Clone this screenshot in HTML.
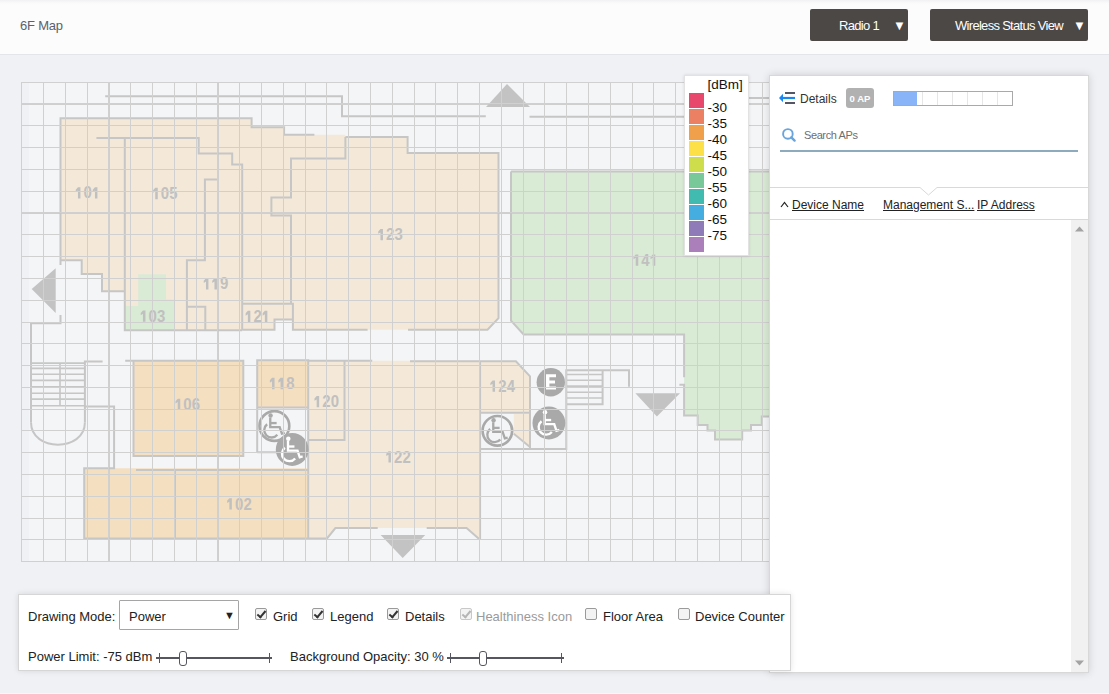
<!DOCTYPE html>
<html><head><meta charset="utf-8">
<style>
*{box-sizing:border-box;}
html,body{margin:0;padding:0;}
body{width:1109px;height:694px;overflow:hidden;position:relative;background:#f0f1f5;font-family:"Liberation Sans",sans-serif;}
.hdr{position:absolute;left:0;top:0;width:1109px;height:55px;background:linear-gradient(#f1f1f3 0px,#fafafb 3px,#fcfcfd 5px);border-bottom:1px solid #e3e5ea;}
.hdr .ttl{position:absolute;left:20px;top:18px;font-size:13px;color:#5c606d;letter-spacing:-0.2px;}
.btn{position:absolute;top:9px;height:32px;background:#4b4846;border-radius:2px;color:#fff;font-size:13px;letter-spacing:-0.7px;}
.btn span{position:absolute;top:9px;white-space:nowrap;}
.btn i{position:absolute;top:9px;font-style:normal;font-size:13px;letter-spacing:0;}
svg.map{position:absolute;left:0;top:0;}
.legend{position:absolute;left:684px;top:75px;width:65px;height:181px;background:#fff;border:1px solid #e2e2e2;box-shadow:0 0 3px rgba(0,0,0,0.12);}
.legend .hd{position:absolute;left:22.5px;top:1px;font-size:13.5px;color:#111;}
.legend .sw{position:absolute;left:4px;width:15px;height:15px;}
.legend .lt{position:absolute;left:22.5px;font-size:13.5px;color:#111;margin-top:-0.5px;}
.panel{position:absolute;left:769px;top:75px;width:320px;height:598px;background:#fff;border:1px solid #d8d8d8;box-shadow:0 0 8px rgba(0,0,0,0.15);}
.ctrl{position:absolute;left:18px;top:594px;width:773px;height:77px;background:#fff;border:1px solid #d6d6d6;box-shadow:0 0 6px rgba(0,0,0,0.11);font-size:13px;color:#222;}
.ctrl .t{position:absolute;white-space:nowrap;margin-top:-1px;}
.cb{position:absolute;width:12px;height:12px;border:1px solid #9a9a9a;border-radius:2px;background:#f3f3f3;}
.cb.on::after{content:"";position:absolute;left:3px;top:0px;width:3px;height:7px;border:solid #333;border-width:0 2px 2px 0;transform:rotate(40deg);}
.cb.dis{border-color:#c8c8c8;}
.cb.dis::after{border-color:#b5b5b5;}
.slider{position:absolute;height:14px;}
.slider .ln{position:absolute;left:0;right:0;top:6px;height:2px;background:#55565f;}
.slider .tk{position:absolute;top:2px;width:1px;height:10px;background:#55565f;}
.slider .th{position:absolute;top:0;width:8px;height:15px;background:#fff;border:1px solid #55565f;border-radius:3px;}
</style></head>
<body>
<div class="hdr"><div class="ttl">6F Map</div></div>
<div class="btn" style="left:810px;width:98px;"><span style="left:29px">Radio 1</span><i style="left:83px">&#9660;</i></div>
<div class="btn" style="left:930px;width:158px;"><span style="left:25px">Wireless Status View</span><i style="left:143px">&#9660;</i></div>

<svg class="map" width="1109" height="694" viewBox="0 0 1109 694">
<rect x="21.6" y="82.4" width="758.4" height="478.61" fill="#f4f5f7"/>
<rect x="22" y="83" width="7" height="478" fill="#eceef1" opacity="0.6"/>
<polygon points="60.5,118.2 251.6,118.2 251.6,127.3 284.1,127.3 284.1,134.7 345.4,134.7 345.4,136.9 407.6,136.9 407.6,152.9 498.5,152.9 498.5,318.2 487.5,329.8 292.9,329.8 292.9,319.4 274.5,319.4 274.5,329.8 124.8,330.3 124.8,291.3 102,291.3 102,274 81.7,274 81.7,260.3 60.5,260.3" fill="#f4e9d8"/>
<rect x="133.5" y="360.7" width="109.8" height="95.3" fill="#f4dfc1"/>
<rect x="257.2" y="360.2" width="51" height="47.4" fill="#f4dfc1"/>
<rect x="84.2" y="468.3" width="223.3" height="70.1" fill="#f4dfc1"/>
<polygon points="308.2,360.8 480.1,360.8 480.1,539.6 466.6,528 335.4,528 327,538.4 308.2,538.4" fill="#f4e9d8"/>
<polygon points="480.1,361.2 515.9,361.2 530,376.3 530,412.8 480.1,412.8" fill="#f4e9d8"/>
<polygon points="513.8,414 530,414 530,448 513.8,433.8" fill="#f4e9d8"/>
<polygon points="511,171.6 780,171.6 780,416.5 761.8,416.5 761.8,425 751,425 751,430.6 742.2,430.6 742.2,439.6 715,439.6 715,430.6 707.5,430.6 707.5,425 697.7,425 697.7,415.6 684.1,415.6 684.1,334.4 523.6,334.4 511,320.6" fill="#d9ead5"/>
<polygon points="138.2,274.2 166.1,274.2 166.1,299.4 174.7,299.4 174.7,330.3 125,330.3 125,305.9 138.2,305.9" fill="#d9ead5"/>
<rect x="257.2" y="407.6" width="51" height="44.7" fill="#f4f5f7"/>
<polyline points="105.2,96.3 342,96.3 342,116.3 485.8,116.3" fill="none" stroke="#c6c6c6" stroke-width="2" stroke-linejoin="miter"/>
<polyline points="529.5,116.7 748,116.7" fill="none" stroke="#c6c6c6" stroke-width="2" stroke-linejoin="miter"/>
<polyline points="748,98 775,98" fill="none" stroke="#c6c6c6" stroke-width="2" stroke-linejoin="miter"/>
<polyline points="109,82 109,562" fill="none" stroke="#cfcfcf" stroke-width="2" stroke-linejoin="miter"/>
<polyline points="218,82 218,562" fill="none" stroke="#cfcfcf" stroke-width="2" stroke-linejoin="miter"/>
<polyline points="21,104 780,104" fill="none" stroke="#cfcfcf" stroke-width="2" stroke-linejoin="miter"/>
<polyline points="21,213 780,213" fill="none" stroke="#cfcfcf" stroke-width="2" stroke-linejoin="miter"/>
<polyline points="60.5,265 60.5,118.2 251.6,118.2 251.6,127.3 284.1,127.3 284.1,134.7 314.4,134.7" fill="none" stroke="#c6c6c6" stroke-width="2" stroke-linejoin="miter"/>
<polyline points="345.4,136.9 407.6,136.9 407.6,152.9 498.5,152.9 498.5,318.2 487.5,329.8 408,329.8" fill="none" stroke="#c6c6c6" stroke-width="2" stroke-linejoin="miter"/>
<polyline points="367.6,329.8 292.9,329.8 292.9,303.7 242.2,303.7" fill="none" stroke="#c6c6c6" stroke-width="2" stroke-linejoin="miter"/>
<polyline points="242.2,329.8 274.5,329.8 274.5,319.4 292.9,319.4" fill="none" stroke="#c6c6c6" stroke-width="2" stroke-linejoin="miter"/>
<polyline points="60.5,260.3 81.7,260.3 81.7,274 102,274 102,291.3 124.8,291.3" fill="none" stroke="#c6c6c6" stroke-width="2" stroke-linejoin="miter"/>
<polyline points="124.8,137.9 124.8,330.3 242.2,330.3" fill="none" stroke="#c6c6c6" stroke-width="2" stroke-linejoin="miter"/>
<polyline points="96.4,137.9 198.7,137.9 198.7,153.4 232.2,153.4 232.2,164.4 242.2,164.4 242.2,330" fill="none" stroke="#c6c6c6" stroke-width="2" stroke-linejoin="miter"/>
<polyline points="217.5,179.6 204.9,179.6 204.9,260.2 186.9,260.2 186.9,330" fill="none" stroke="#c6c6c6" stroke-width="2" stroke-linejoin="miter"/>
<polyline points="186.9,306.8 205.3,306.8 205.3,330" fill="none" stroke="#c6c6c6" stroke-width="2" stroke-linejoin="miter"/>
<polyline points="345.4,136.9 345.4,158.5 291,158.5 291,197.5 271.4,197.5 271.4,215.6 291,215.6 291,303.7" fill="none" stroke="#c6c6c6" stroke-width="2" stroke-linejoin="miter"/>
<polyline points="60.5,314.9 60.5,323.3 31,323.3 31,422.6" fill="none" stroke="#c6c6c6" stroke-width="2" stroke-linejoin="miter"/>
<path d="M31,422.6 C31,452 84.9,452 84.9,422.6" fill="none" stroke="#c6c6c6" stroke-width="2"/>
<polyline points="84.9,422.6 84.9,361.5 102.6,361.5" fill="none" stroke="#c6c6c6" stroke-width="2" stroke-linejoin="miter"/>
<polyline points="31,363.1 84.9,363.1" fill="none" stroke="#c6c6c6" stroke-width="1.6" stroke-linejoin="miter"/>
<polyline points="31,368.4 84.9,368.4" fill="none" stroke="#c6c6c6" stroke-width="1.6" stroke-linejoin="miter"/>
<polyline points="31,374.2 84.9,374.2" fill="none" stroke="#c6c6c6" stroke-width="1.6" stroke-linejoin="miter"/>
<polyline points="31,380.4 84.9,380.4" fill="none" stroke="#c6c6c6" stroke-width="1.6" stroke-linejoin="miter"/>
<polyline points="31,386.9 84.9,386.9" fill="none" stroke="#c6c6c6" stroke-width="1.6" stroke-linejoin="miter"/>
<polyline points="31,393.3 84.9,393.3" fill="none" stroke="#c6c6c6" stroke-width="1.6" stroke-linejoin="miter"/>
<polyline points="31,399.1 84.9,399.1" fill="none" stroke="#c6c6c6" stroke-width="1.6" stroke-linejoin="miter"/>
<polyline points="31,405.8 84.9,405.8" fill="none" stroke="#c6c6c6" stroke-width="1.6" stroke-linejoin="miter"/>
<polyline points="60,363 60,406" fill="none" stroke="#c6c6c6" stroke-width="1.6" stroke-linejoin="miter"/>
<polyline points="84.9,406.5 114.1,406.5 114.1,468.3 84.2,468.3 84.2,538.4 327,538.4 335.4,528 377.7,528" fill="none" stroke="#c6c6c6" stroke-width="2" stroke-linejoin="miter"/>
<polyline points="426.7,528 466.6,528 479.7,539.6" fill="none" stroke="#c6c6c6" stroke-width="2" stroke-linejoin="miter"/>
<polyline points="136,469.9 308.7,469.9" fill="none" stroke="#c6c6c6" stroke-width="2" stroke-linejoin="miter"/>
<polyline points="175,470 175,538" fill="none" stroke="#c6c6c6" stroke-width="2" stroke-linejoin="miter"/>
<polyline points="125.2,360.7 243.3,360.7 243.3,456 133.5,456 133.5,360.7" fill="none" stroke="#c6c6c6" stroke-width="2" stroke-linejoin="miter"/>
<polyline points="257.2,452.3 257.2,360.2 308.2,360.2 308.2,538.4" fill="none" stroke="#c6c6c6" stroke-width="2" stroke-linejoin="miter"/>
<polyline points="257.2,407.6 308.2,407.6" fill="none" stroke="#c6c6c6" stroke-width="2" stroke-linejoin="miter"/>
<polyline points="257.2,452.3 308.2,452.3" fill="none" stroke="#c6c6c6" stroke-width="2" stroke-linejoin="miter"/>
<polyline points="308.2,360.8 372.2,360.8" fill="none" stroke="#c6c6c6" stroke-width="2" stroke-linejoin="miter"/>
<polyline points="344.5,360.8 344.5,440 308.2,440" fill="none" stroke="#c6c6c6" stroke-width="2" stroke-linejoin="miter"/>
<polyline points="410,361.2 515.9,361.2 530,376.3 530,448" fill="none" stroke="#c6c6c6" stroke-width="2" stroke-linejoin="miter"/>
<polyline points="480.1,361.2 480.1,539.6" fill="none" stroke="#c6c6c6" stroke-width="2" stroke-linejoin="miter"/>
<polyline points="480.1,412.8 530,412.8" fill="none" stroke="#c6c6c6" stroke-width="2" stroke-linejoin="miter"/>
<polyline points="480.1,449 566.3,449 566.3,370.3 629,370.3 629,386.8" fill="none" stroke="#c6c6c6" stroke-width="2" stroke-linejoin="miter"/>
<polyline points="602.6,370.3 602.6,404.2 566.3,404.2" fill="none" stroke="#c6c6c6" stroke-width="2" stroke-linejoin="miter"/>
<polyline points="566.3,374.5 602.6,374.5" fill="none" stroke="#c6c6c6" stroke-width="1.6" stroke-linejoin="miter"/>
<polyline points="566.3,380.2 602.6,380.2" fill="none" stroke="#c6c6c6" stroke-width="1.6" stroke-linejoin="miter"/>
<polyline points="566.3,386.1 602.6,386.1" fill="none" stroke="#c6c6c6" stroke-width="1.6" stroke-linejoin="miter"/>
<polyline points="566.3,392.2 602.6,392.2" fill="none" stroke="#c6c6c6" stroke-width="1.6" stroke-linejoin="miter"/>
<polyline points="566.3,398 602.6,398" fill="none" stroke="#c6c6c6" stroke-width="1.6" stroke-linejoin="miter"/>
<polyline points="513.8,433.8 530,447" fill="none" stroke="#c6c6c6" stroke-width="2" stroke-linejoin="miter"/>
<polyline points="511,171.6 780,171.6" fill="none" stroke="#c6c6c6" stroke-width="2" stroke-linejoin="miter"/>
<polyline points="511,171.6 511,320.6 523.6,334.4 684.1,334.4 684.1,377.2" fill="none" stroke="#c6c6c6" stroke-width="2" stroke-linejoin="miter"/>
<polyline points="679.4,384.7 684.1,384.7 684.1,415.6 697.7,415.6 697.7,425 707.5,425 707.5,430.6 715,430.6 715,439.6 742.2,439.6 742.2,430.6 751,430.6 751,425 761.8,425 761.8,416.5 775,416.5" fill="none" stroke="#c6c6c6" stroke-width="2" stroke-linejoin="miter"/>
<polygon points="486,107 530,107 507,84" fill="#c3c3c4"/>
<polygon points="31.7,288.9 55.7,268.2 55.7,312.9" fill="#c3c3c4"/>
<polygon points="380.7,535 425.2,535 402.7,558" fill="#c3c3c4"/>
<polygon points="635.4,393.2 680,393.2 656.9,416.5" fill="#c3c3c4"/>
<circle cx="292.2" cy="449.5" r="16.4" fill="#a9a9a9"/><g transform="translate(292.2,449.5) scale(1.025)" fill="none" stroke="#ffffff" stroke-width="2.5" stroke-linecap="butt" stroke-linejoin="miter"><circle cx="-3.8" cy="-10.4" r="2.2" fill="#ffffff" stroke="none"/><path d="M-4.1,-8.5 V1.1 H5.2 L7.4,7.6 L10.2,6.8" stroke-width="2.3"/><path d="M-4.1,-2.9 H2.2" stroke-width="2.3"/><path d="M-7.19,-1.75 A7.3,7.3 0 1 0 2.89,8.69" stroke-width="2.3"/></g>
<circle cx="548.9" cy="423" r="16.4" fill="#a9a9a9"/><g transform="translate(548.9,423) scale(1.025)" fill="none" stroke="#ffffff" stroke-width="2.5" stroke-linecap="butt" stroke-linejoin="miter"><circle cx="-3.8" cy="-10.4" r="2.2" fill="#ffffff" stroke="none"/><path d="M-4.1,-8.5 V1.1 H5.2 L7.4,7.6 L10.2,6.8" stroke-width="2.3"/><path d="M-4.1,-2.9 H2.2" stroke-width="2.3"/><path d="M-7.19,-1.75 A7.3,7.3 0 1 0 2.89,8.69" stroke-width="2.3"/></g>
<circle cx="274.4" cy="426" r="14.9" fill="none" stroke="#a9a9a9" stroke-width="2.6"/><g transform="translate(274.4,426) scale(1.0125)" fill="none" stroke="#a9a9a9" stroke-width="2.5" stroke-linecap="butt" stroke-linejoin="miter"><circle cx="-3.8" cy="-10.4" r="2.2" fill="#a9a9a9" stroke="none"/><path d="M-4.1,-8.5 V1.1 H5.2 L7.4,7.6 L10.2,6.8" stroke-width="2.3"/><path d="M-4.1,-2.9 H2.2" stroke-width="2.3"/><path d="M-7.19,-1.75 A7.3,7.3 0 1 0 2.89,8.69" stroke-width="2.3"/></g>
<circle cx="497.4" cy="430.8" r="14.8" fill="none" stroke="#a9a9a9" stroke-width="2.6"/><g transform="translate(497.4,430.8) scale(1.00625)" fill="none" stroke="#a9a9a9" stroke-width="2.5" stroke-linecap="butt" stroke-linejoin="miter"><circle cx="-3.8" cy="-10.4" r="2.2" fill="#a9a9a9" stroke="none"/><path d="M-4.1,-8.5 V1.1 H5.2 L7.4,7.6 L10.2,6.8" stroke-width="2.3"/><path d="M-4.1,-2.9 H2.2" stroke-width="2.3"/><path d="M-7.19,-1.75 A7.3,7.3 0 1 0 2.89,8.69" stroke-width="2.3"/></g>
<circle cx="550.8" cy="382.2" r="14.2" fill="#a9a9a9"/>
<path d="M546,374.2 H556 V377.2 H549.4 V380.4 H555 V383.4 H549.4 V386.4 H556 V389.4 H546 Z" fill="#fff"/>
<path d="M80.45,187.15 V198.45 H77.95 V190.55 L75.75,191.95 V189.65 L77.95,187.15 Z" fill="#c0c0c0"/>
<text x="87.70" y="198.45" text-anchor="middle" font-family="Liberation Sans" font-weight="bold" font-size="16" textLength="8.3" lengthAdjust="spacingAndGlyphs" fill="#c0c0c0">0</text>
<path d="M97.45,187.15 V198.45 H94.95 V190.55 L92.75,191.95 V189.65 L94.95,187.15 Z" fill="#c0c0c0"/>
<path d="M157.75,187.85 V199.15 H155.25 V191.25 L153.05,192.65 V190.35 L155.25,187.85 Z" fill="#c0c0c0"/>
<text x="165.00" y="199.15" text-anchor="middle" font-family="Liberation Sans" font-weight="bold" font-size="16" textLength="8.3" lengthAdjust="spacingAndGlyphs" fill="#c0c0c0">0</text>
<text x="173.50" y="199.15" text-anchor="middle" font-family="Liberation Sans" font-weight="bold" font-size="16" textLength="8.3" lengthAdjust="spacingAndGlyphs" fill="#c0c0c0">5</text>
<path d="M208.45,278.15 V289.45 H205.95 V281.55 L203.75,282.95 V280.65 L205.95,278.15 Z" fill="#c0c0c0"/>
<path d="M216.95,278.15 V289.45 H214.45 V281.55 L212.25,282.95 V280.65 L214.45,278.15 Z" fill="#c0c0c0"/>
<text x="224.20" y="289.45" text-anchor="middle" font-family="Liberation Sans" font-weight="bold" font-size="16" textLength="8.3" lengthAdjust="spacingAndGlyphs" fill="#c0c0c0">9</text>
<path d="M250.35,310.85 V322.15 H247.85 V314.25 L245.65,315.65 V313.35 L247.85,310.85 Z" fill="#c0c0c0"/>
<text x="257.60" y="322.15" text-anchor="middle" font-family="Liberation Sans" font-weight="bold" font-size="16" textLength="8.3" lengthAdjust="spacingAndGlyphs" fill="#c0c0c0">2</text>
<path d="M267.35,310.85 V322.15 H264.85 V314.25 L262.65,315.65 V313.35 L264.85,310.85 Z" fill="#c0c0c0"/>
<path d="M382.95,229.05 V240.35 H380.45 V232.45 L378.25,233.85 V231.55 L380.45,229.05 Z" fill="#c0c0c0"/>
<text x="390.20" y="240.35" text-anchor="middle" font-family="Liberation Sans" font-weight="bold" font-size="16" textLength="8.3" lengthAdjust="spacingAndGlyphs" fill="#c0c0c0">2</text>
<text x="398.70" y="240.35" text-anchor="middle" font-family="Liberation Sans" font-weight="bold" font-size="16" textLength="8.3" lengthAdjust="spacingAndGlyphs" fill="#c0c0c0">3</text>
<path d="M145.45,310.45 V321.75 H142.95 V313.85 L140.75,315.25 V312.95 L142.95,310.45 Z" fill="#c0c0c0"/>
<text x="152.70" y="321.75" text-anchor="middle" font-family="Liberation Sans" font-weight="bold" font-size="16" textLength="8.3" lengthAdjust="spacingAndGlyphs" fill="#c0c0c0">0</text>
<text x="161.20" y="321.75" text-anchor="middle" font-family="Liberation Sans" font-weight="bold" font-size="16" textLength="8.3" lengthAdjust="spacingAndGlyphs" fill="#c0c0c0">3</text>
<path d="M180.25,398.65 V409.95 H177.75 V402.05 L175.55,403.45 V401.15 L177.75,398.65 Z" fill="#c0c0c0"/>
<text x="187.50" y="409.95" text-anchor="middle" font-family="Liberation Sans" font-weight="bold" font-size="16" textLength="8.3" lengthAdjust="spacingAndGlyphs" fill="#c0c0c0">0</text>
<text x="196.00" y="409.95" text-anchor="middle" font-family="Liberation Sans" font-weight="bold" font-size="16" textLength="8.3" lengthAdjust="spacingAndGlyphs" fill="#c0c0c0">6</text>
<path d="M274.55,377.85 V389.15 H272.05 V381.25 L269.85,382.65 V380.35 L272.05,377.85 Z" fill="#c0c0c0"/>
<path d="M283.05,377.85 V389.15 H280.55 V381.25 L278.35,382.65 V380.35 L280.55,377.85 Z" fill="#c0c0c0"/>
<text x="290.30" y="389.15" text-anchor="middle" font-family="Liberation Sans" font-weight="bold" font-size="16" textLength="8.3" lengthAdjust="spacingAndGlyphs" fill="#c0c0c0">8</text>
<path d="M319.15,396.05 V407.35 H316.65 V399.45 L314.45,400.85 V398.55 L316.65,396.05 Z" fill="#c0c0c0"/>
<text x="326.40" y="407.35" text-anchor="middle" font-family="Liberation Sans" font-weight="bold" font-size="16" textLength="8.3" lengthAdjust="spacingAndGlyphs" fill="#c0c0c0">2</text>
<text x="334.90" y="407.35" text-anchor="middle" font-family="Liberation Sans" font-weight="bold" font-size="16" textLength="8.3" lengthAdjust="spacingAndGlyphs" fill="#c0c0c0">0</text>
<path d="M390.95,451.25 V462.55 H388.45 V454.65 L386.25,456.05 V453.75 L388.45,451.25 Z" fill="#c0c0c0"/>
<text x="398.20" y="462.55" text-anchor="middle" font-family="Liberation Sans" font-weight="bold" font-size="16" textLength="8.3" lengthAdjust="spacingAndGlyphs" fill="#c0c0c0">2</text>
<text x="406.70" y="462.55" text-anchor="middle" font-family="Liberation Sans" font-weight="bold" font-size="16" textLength="8.3" lengthAdjust="spacingAndGlyphs" fill="#c0c0c0">2</text>
<path d="M231.85,498.25 V509.55 H229.35 V501.65 L227.15,503.05 V500.75 L229.35,498.25 Z" fill="#c0c0c0"/>
<text x="239.10" y="509.55" text-anchor="middle" font-family="Liberation Sans" font-weight="bold" font-size="16" textLength="8.3" lengthAdjust="spacingAndGlyphs" fill="#c0c0c0">0</text>
<text x="247.60" y="509.55" text-anchor="middle" font-family="Liberation Sans" font-weight="bold" font-size="16" textLength="8.3" lengthAdjust="spacingAndGlyphs" fill="#c0c0c0">2</text>
<path d="M495.05,380.45 V391.75 H492.55 V383.85 L490.35,385.25 V382.95 L492.55,380.45 Z" fill="#c0c0c0"/>
<text x="502.30" y="391.75" text-anchor="middle" font-family="Liberation Sans" font-weight="bold" font-size="16" textLength="8.3" lengthAdjust="spacingAndGlyphs" fill="#c0c0c0">2</text>
<text x="510.80" y="391.75" text-anchor="middle" font-family="Liberation Sans" font-weight="bold" font-size="16" textLength="8.3" lengthAdjust="spacingAndGlyphs" fill="#c0c0c0">4</text>
<path d="M638.25,254.45 V265.75 H635.75 V257.85 L633.55,259.25 V256.95 L635.75,254.45 Z" fill="#c0c0c0"/>
<text x="645.50" y="265.75" text-anchor="middle" font-family="Liberation Sans" font-weight="bold" font-size="16" textLength="8.3" lengthAdjust="spacingAndGlyphs" fill="#c0c0c0">4</text>
<path d="M655.25,254.45 V265.75 H652.75 V257.85 L650.55,259.25 V256.95 L652.75,254.45 Z" fill="#c0c0c0"/>
<path d="M21.5,82V562M43.5,82V562M65.5,82V562M87.5,82V562M108.5,82V562M130.5,82V562M152.5,82V562M174.5,82V562M196.5,82V562M217.5,82V562M239.5,82V562M261.5,82V562M283.5,82V562M305.5,82V562M326.5,82V562M348.5,82V562M370.5,82V562M392.5,82V562M414.5,82V562M435.5,82V562M457.5,82V562M479.5,82V562M501.5,82V562M523.5,82V562M544.5,82V562M566.5,82V562M588.5,82V562M610.5,82V562M632.5,82V562M653.5,82V562M675.5,82V562M697.5,82V562M719.5,82V562M741.5,82V562M762.5,82V562M21,82.5H780M21,103.5H780M21,125.5H780M21,147.5H780M21,169.5H780M21,191.5H780M21,212.5H780M21,234.5H780M21,256.5H780M21,278.5H780M21,300.5H780M21,322.5H780M21,343.5H780M21,365.5H780M21,387.5H780M21,409.5H780M21,430.5H780M21,452.5H780M21,474.5H780M21,496.5H780M21,518.5H780M21,539.5H780M21,561.5H780" stroke="#d0d0d0" stroke-width="1" fill="none" shape-rendering="crispEdges"/>
</svg>

<div class="legend"><div class="hd">[dBm]</div><div class="sw" style="top:17px;background:#e8486c"></div><div class="sw" style="top:33px;background:#ec8063"></div><div class="sw" style="top:49px;background:#f0a04b"></div><div class="sw" style="top:65px;background:#fde047"></div><div class="sw" style="top:81px;background:#cddd4b"></div><div class="sw" style="top:97px;background:#79c89a"></div><div class="sw" style="top:113px;background:#41bbb0"></div><div class="sw" style="top:129px;background:#46ade0"></div><div class="sw" style="top:145px;background:#8f7bb8"></div><div class="sw" style="top:161px;background:#ab7fb9"></div><div class="lt" style="top:24px">-30</div><div class="lt" style="top:40px">-35</div><div class="lt" style="top:56px">-40</div><div class="lt" style="top:72px">-45</div><div class="lt" style="top:88px">-50</div><div class="lt" style="top:104px">-55</div><div class="lt" style="top:120px">-60</div><div class="lt" style="top:136px">-65</div><div class="lt" style="top:152px">-75</div></div>

<div class="panel">
  <svg style="position:absolute;left:9px;top:16px" width="18" height="14" viewBox="0 0 18 14">
    <path d="M4,6 H16" stroke="#1b88f2" stroke-width="2.2"/>
    <polygon points="0,6 4,1.8 4,10.2" fill="#1b88f2"/>
    <path d="M6,1 H16 M6,11 H16" stroke="#535765" stroke-width="2"/>
  </svg>
  <div style="position:absolute;left:30px;top:16px;font-size:12px;color:#333;">Details</div>
  <div style="position:absolute;left:76px;top:12px;width:28px;height:20px;background:#b1b1b1;border-radius:3px;color:#fff;font-size:9.5px;font-weight:bold;text-align:center;line-height:21px;letter-spacing:0px;">0 AP</div>
  <div style="position:absolute;left:123px;top:15px;width:120px;height:15px;border:1px solid #a9a9a9;background:#fff;">
    <div style="position:absolute;left:0;top:0;width:23px;height:13px;background:#8ab4f8;"></div>
    <div style="position:absolute;left:28px;top:0;width:1px;height:13px;background:#e6e6e6;"></div>
    <div style="position:absolute;left:43px;top:0;width:1px;height:13px;background:#e6e6e6;"></div>
    <div style="position:absolute;left:58px;top:0;width:1px;height:13px;background:#e6e6e6;"></div>
    <div style="position:absolute;left:73px;top:0;width:1px;height:13px;background:#e6e6e6;"></div>
    <div style="position:absolute;left:88px;top:0;width:1px;height:13px;background:#e6e6e6;"></div>
    <div style="position:absolute;left:103px;top:0;width:1px;height:13px;background:#e6e6e6;"></div>
  </div>
  <svg style="position:absolute;left:11px;top:52px" width="16" height="16" viewBox="0 0 16 16">
    <circle cx="6.9" cy="5.9" r="4.8" fill="none" stroke="#69a4dc" stroke-width="1.9"/>
    <path d="M10.3,9.3 L13.6,12.6" stroke="#69a4dc" stroke-width="2.4" stroke-linecap="round"/>
  </svg>
  <div style="position:absolute;left:34px;top:53px;font-size:11px;color:#6e6e6e;letter-spacing:-0.4px;">Search APs</div>
  <div style="position:absolute;left:10px;top:74px;width:298px;height:2px;background:#8eaabf;"></div>
  <svg style="position:absolute;left:0;top:106px" width="318" height="14" viewBox="0 0 318 14"><path d="M0,5.5 H150 L158.5,13 L167,5.5 H318" fill="none" stroke="#d9d9d9" stroke-width="1"/></svg>
  <div style="position:absolute;left:0;top:143px;width:318px;height:1px;background:#d9d9d9;"></div>
  <svg style="position:absolute;left:10px;top:125px" width="9" height="7" viewBox="0 0 9 7"><path d="M1,6 L4.5,1.5 L8,6" fill="none" stroke="#222" stroke-width="1.2"/></svg>
  <div style="position:absolute;left:22px;top:122px;font-size:12px;color:#222;text-decoration:underline;">Device Name</div>
  <div style="position:absolute;left:113px;top:122px;font-size:12px;color:#222;text-decoration:underline;">Management S...</div>
  <div style="position:absolute;left:207px;top:122px;font-size:12px;color:#222;text-decoration:underline;">IP Address</div>
  <div style="position:absolute;left:301px;top:144px;width:17px;height:452px;background:#f1f1f1;">
    <svg style="position:absolute;left:4px;top:6px" width="9" height="6" viewBox="0 0 9 6"><polygon points="0,5.5 9,5.5 4.5,0.5" fill="#a3a3a3"/></svg>
    <svg style="position:absolute;left:4px;top:440px" width="9" height="6" viewBox="0 0 9 6"><polygon points="0,0.5 9,0.5 4.5,5.5" fill="#a3a3a3"/></svg>
  </div>
</div>

<div class="ctrl">
  <div class="t" style="left:9px;top:15px;">Drawing Mode:</div>
  <div style="position:absolute;left:100px;top:5px;width:120px;height:30px;border:1px solid #a5a5a5;border-radius:1px;">
    <div class="t" style="left:9px;top:9px;">Power</div>
    <div class="t" style="left:104px;top:9px;font-size:11px;">&#9660;</div>
  </div>
  <div class="cb on" style="left:236px;top:13px;"></div><div class="t" style="left:254px;top:15px;">Grid</div>
  <div class="cb on" style="left:293px;top:13px;"></div><div class="t" style="left:311px;top:15px;">Legend</div>
  <div class="cb on" style="left:368px;top:13px;"></div><div class="t" style="left:386px;top:15px;">Details</div>
  <div class="cb on dis" style="left:441px;top:13px;"></div><div class="t" style="left:457px;top:15px;color:#9a9a9a;">Healthiness Icon</div>
  <div class="cb" style="left:566px;top:13px;"></div><div class="t" style="left:584px;top:15px;">Floor Area</div>
  <div class="cb" style="left:659px;top:13px;"></div><div class="t" style="left:676px;top:15px;">Device Counter</div>

  <div class="t" style="left:9px;top:55px;">Power Limit: -75 dBm</div>
  <div class="slider" style="left:137px;top:56px;width:116px;"><div class="ln"></div><div class="tk" style="left:3px"></div><div class="tk" style="left:113px"></div><div class="th" style="left:23px"></div></div>
  <div class="t" style="left:271px;top:55px;">Background Opacity: 30 %</div>
  <div class="slider" style="left:428px;top:56px;width:117px;"><div class="ln"></div><div class="tk" style="left:3px"></div><div class="tk" style="left:114px"></div><div class="th" style="left:32px"></div></div>
</div>
<div style="position:absolute;left:0;top:693px;width:1109px;height:1px;background:#f6f7f9;"></div>
</body></html>
